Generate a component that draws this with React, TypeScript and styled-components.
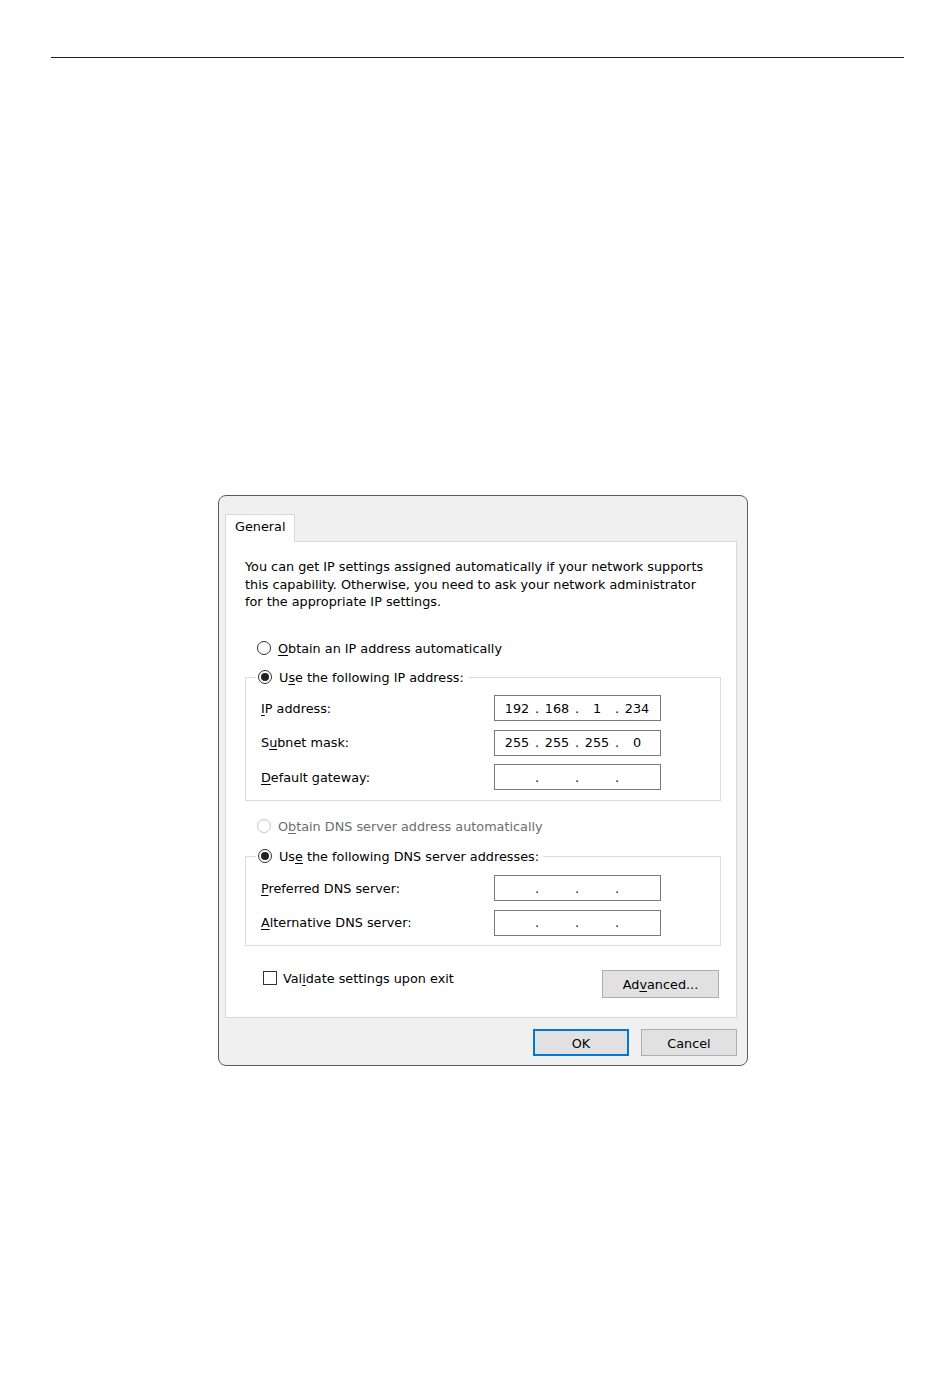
import React from 'react'
import styled, { createGlobalStyle } from 'styled-components'

const GlobalStyle = createGlobalStyle`
  body {
    margin: 0;
    background: #fff;
    font-family: 'DejaVu Sans', Verdana, sans-serif;
    font-size: 12.8px;
    color: #000;
  }
`

const Page = styled.div`
  width: 950px;
  min-height: 1387px;
  padding-top: 57px;
  box-sizing: border-box;
`

const Rule = styled.hr`
  margin: 0 46px 0 51px;
  border: 0;
  border-top: 1px solid #1e1e1e;
`

const Dialog = styled.div`
  width: 530px;
  margin: 437px 0 0 218px;
  box-sizing: border-box;
  border: 1px solid #5c5c5c;
  border-radius: 8px;
  background: #f0f0f0;
  padding: 18px 10px 9px 6px;
  display: flex;
  flex-direction: column;
`

const TabStrip = styled.div`
  display: flex;
`

const Tab = styled.div`
  position: relative;
  z-index: 1;
  width: 70px;
  height: 28px;
  box-sizing: border-box;
  margin-bottom: -1px;
  padding: 3px 0 0 9px;
  border: 1px solid #d9d9d9;
  border-bottom: none;
  background: #fff;
  line-height: 18px;
`

const Panel = styled.div`
  border: 1px solid #d9d9d9;
  background: #fff;
  padding: 16px 15px 19px 19px;
  display: flex;
  flex-direction: column;
`

const Intro = styled.p`
  margin: 0;
  line-height: 17.5px;
`

const Key = styled.span`
  text-decoration: underline;
  text-underline-offset: 2px;
`

const RadioRow = styled.label<{ $mt?: number; $disabled?: boolean }>`
  display: flex;
  align-items: center;
  gap: 7px;
  height: 18px;
  margin-top: ${p => p.$mt ?? 0}px;
  padding-left: 12px;
  color: ${p => (p.$disabled ? '#6d6d6d' : '#000')};
`

const Circle = styled.span<{ $checked?: boolean; $disabled?: boolean }>`
  width: 14px;
  height: 14px;
  box-sizing: border-box;
  border-radius: 50%;
  border: 1px solid ${p => (p.$disabled ? '#c4c4c4' : '#333')};
  background: #fff;
  display: flex;
  align-items: center;
  justify-content: center;
  flex: none;

  &::after {
    content: '';
    width: 8px;
    height: 8px;
    border-radius: 50%;
    background: #222;
    display: ${p => (p.$checked ? 'block' : 'none')};
  }
`

const Group = styled.fieldset<{ $mt: number; $pt: number; $pb: number }>`
  margin: ${p => p.$mt}px 0 0 0;
  padding: ${p => p.$pt}px 0 ${p => p.$pb}px 0;
  border: 1px solid #dcdcdc;
  min-inline-size: 0;
`

const Legend = styled.legend`
  margin-left: 10px;
  padding: 0 4px 0 2px;
  display: flex;
  align-items: center;
  gap: 7px;
  height: 18px;
`

const Fields = styled.div`
  display: grid;
  grid-template-columns: 233px 167px;
  row-gap: 8.5px;
  align-items: center;
  padding-left: 15px;
`

const FieldLabel = styled.span``

const IpBox = styled.div`
  height: 26px;
  box-sizing: border-box;
  border: 1px solid #7a7a7a;
  padding-left: 4px;
  display: flex;
  align-items: center;
  background: #fff;
`

const Octet = styled.span`
  width: 36px;
  text-align: center;
`

const Dot = styled.span`
  width: 4px;
  text-align: center;
`

const BottomRow = styled.div`
  margin-top: 23px;
  display: flex;
  justify-content: space-between;
  align-items: flex-start;
`

const CheckRow = styled.label`
  display: flex;
  align-items: center;
  gap: 6px;
  height: 18px;
  padding-left: 18px;
`

const Box = styled.span`
  width: 14px;
  height: 14px;
  box-sizing: border-box;
  border: 1px solid #333;
  background: #fff;
`

const Button = styled.button<{ $default?: boolean; $w: number; $h: number }>`
  width: ${p => p.$w}px;
  height: ${p => p.$h}px;
  box-sizing: border-box;
  padding: 1px 0 0;
  background: #e1e1e1;
  border: ${p => (p.$default ? '2px solid #0078d7' : '1px solid #adadad')};
  font-family: inherit;
  font-size: 12.8px;
  color: #000;
`

const AdvancedButton = styled(Button)`
  margin: 1px 2px 0 0;
`

const Actions = styled.div`
  margin-top: 11px;
  display: flex;
  justify-content: flex-end;
  gap: 12px;
`

function IpField({ value }: { value?: string[] }) {
  const parts = value ?? ['', '', '', '']
  return (
    <IpBox>
      {parts.map((p, i) => (
        <React.Fragment key={i}>
          {i > 0 && <Dot>.</Dot>}
          <Octet>{p}</Octet>
        </React.Fragment>
      ))}
    </IpBox>
  )
}

export default function App() {
  return (
    <Page>
      <GlobalStyle />
      <Rule />
      <Dialog>
        <TabStrip>
          <Tab>General</Tab>
        </TabStrip>
        <Panel>
          <Intro>
            You can get IP settings assigned automatically if your network supports
            <br />
            this capability. Otherwise, you need to ask your network administrator
            <br />
            for the appropriate IP settings.
          </Intro>

          <RadioRow $mt={28.5}>
            <Circle />
            <span>
              <Key>O</Key>btain an IP address automatically
            </span>
          </RadioRow>

          <Group $mt={11} $pt={9} $pb={10}>
            <Legend>
              <Circle $checked />
              <span>
                U<Key>s</Key>e the following IP address:
              </span>
            </Legend>
            <Fields>
              <FieldLabel>
                <Key>I</Key>P address:
              </FieldLabel>
              <IpField value={['192', '168', '1', '234']} />
              <FieldLabel>
                S<Key>u</Key>bnet mask:
              </FieldLabel>
              <IpField value={['255', '255', '255', '0']} />
              <FieldLabel>
                <Key>D</Key>efault gateway:
              </FieldLabel>
              <IpField />
            </Fields>
          </Group>

          <RadioRow $mt={16} $disabled>
            <Circle $disabled />
            <span>
              O<Key>b</Key>tain DNS server address automatically
            </span>
          </RadioRow>

          <Group $mt={12} $pt={10} $pb={9.5}>
            <Legend>
              <Circle $checked />
              <span>
                Us<Key>e</Key> the following DNS server addresses:
              </span>
            </Legend>
            <Fields>
              <FieldLabel>
                <Key>P</Key>referred DNS server:
              </FieldLabel>
              <IpField />
              <FieldLabel>
                <Key>A</Key>lternative DNS server:
              </FieldLabel>
              <IpField />
            </Fields>
          </Group>

          <BottomRow>
            <CheckRow>
              <Box />
              <span>
                Val<Key>i</Key>date settings upon exit
              </span>
            </CheckRow>
            <AdvancedButton $w={117} $h={28}>
              Ad<Key>v</Key>anced...
            </AdvancedButton>
          </BottomRow>
        </Panel>
        <Actions>
          <Button $default $w={96} $h={27}>
            OK
          </Button>
          <Button $w={96} $h={27}>
            Cancel
          </Button>
        </Actions>
      </Dialog>
    </Page>
  )
}
